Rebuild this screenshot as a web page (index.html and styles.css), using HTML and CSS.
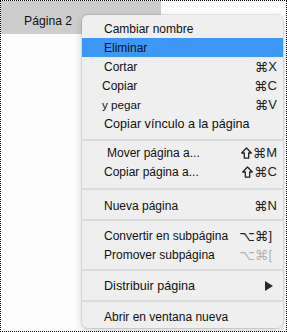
FILE: index.html
```html
<!DOCTYPE html>
<html lang="es">
<head>
  <meta charset="UTF-8" />
  <meta name="viewport" content="width=device-width, initial-scale=1.0" />
  <title>Menú de página</title>
  <link rel="stylesheet" href="styles.css">
</head>
<body>
  <div class="frame">
    <!-- Page tab -->
    <div class="page-tab">Página 2</div>

    <!-- Context menu -->
    <div class="context-menu">
      <div class="item item-first"><span class="label">Cambiar nombre</span></div>
      <div class="item active"><span class="label">Eliminar</span></div>
      <div class="item"><span class="label">Cortar</span><span class="keys"><span class="sym">⌘</span>X</span></div>
      <div class="item"><span class="label nudge-left">Copiar</span><span class="keys"><span class="sym">⌘</span>C</span></div>
      <div class="item"><span class="label nudge-left small">y pegar</span><span class="keys"><span class="sym">⌘</span>V</span></div>
      <div class="item"><span class="label big">Copiar vínculo a la página</span></div>
      <div class="sep sep-a"></div>
      <div class="item"><span class="label nudge-right">Mover página a...</span>
        <span class="keys"><svg class="shift" width="11" height="12" viewBox="0 0 11 12"><polygon points="5.5,1 10.3,6 7.7,6 7.7,11.2 3.3,11.2 3.3,6 0.7,6" fill="none" stroke="#222" stroke-width="1.3" stroke-linejoin="round"/></svg><span class="sym">⌘</span>M</span></div>
      <div class="item"><span class="label">Copiar página a...</span>
        <span class="keys"><svg class="shift" width="11" height="12" viewBox="0 0 11 12"><polygon points="5.5,1 10.3,6 7.7,6 7.7,11.2 3.3,11.2 3.3,6 0.7,6" fill="none" stroke="#222" stroke-width="1.3" stroke-linejoin="round"/></svg><span class="sym">⌘</span>C</span></div>
      <div class="sep sep-b"></div>
      <div class="item"><span class="label">Nueva página</span><span class="keys"><span class="sym">⌘</span>N</span></div>
      <div class="sep sep-c"></div>
      <div class="item"><span class="label">Convertir en subpágina</span><span class="keys bracket"><span class="sym">⌥⌘</span>]</span></div>
      <div class="item"><span class="label">Promover subpágina</span><span class="keys bracket disabled"><span class="sym">⌥⌘</span>[</span></div>
      <div class="sep sep-d"></div>
      <div class="item"><span class="label big">Distribuir página</span>
        <svg class="arrow" width="8" height="10" viewBox="0 0 8 10"><polygon points="0,0 8,5 0,10" fill="#2a2a2a"/></svg>
      </div>
      <div class="sep sep-d"></div>
      <div class="item"><span class="label">Abrir en ventana nueva</span></div>
    </div>
  </div>
</body>
</html>
```

FILE: styles.css
```css
body {
  margin: 0;
  font-family: 'Liberation Sans', Arial, sans-serif;
  color: #111;
  background: #fff;
}
.frame {
  width: 287px;
  height: 332px;
  box-sizing: border-box;
  border: 1px dotted #000;
  position: relative;
  overflow: hidden;
  background: #fdfdfd;
}
.page-tab {
  width: 160px;
  height: 33px;
  box-sizing: border-box;
  padding: 12px 0 0 23px;
  background: #cdcdcd;
  font-size: 12.2px;
  line-height: 16px;
}
/* Context menu overlay */
.context-menu {
  position: absolute;
  left: 81px;
  top: 14px;
  width: 201px;
  height: 313px;
  box-sizing: border-box;
  padding-top: 4px;
  background: #efefef;
  border-radius: 6px;
  box-shadow: 0 0 0 1px rgba(0, 0, 0, 0.08), 0 3px 8px rgba(0, 0, 0, 0.18);
}
.item {
  height: 19px;
  display: flex;
  align-items: center;
  justify-content: space-between;
  padding: 0 6px 0 22px;
  font-size: 12px;
}
.item.active {
  background: #3d97f6;
}
.label {
  white-space: nowrap;
}
.label.big {
  font-size: 12.6px;
}
.label.small {
  font-size: 11.7px;
}
.nudge-left {
  margin-left: -2px;
}
.nudge-right {
  margin-left: 3px;
}
.keys {
  display: flex;
  align-items: center;
  font-size: 13px;
  white-space: nowrap;
  color: #222;
}
.sym {
  font-family: 'DejaVu Sans', sans-serif;
  font-size: 13.5px;
}
.shift {
  margin-right: 1px;
}
.keys.bracket {
  margin-right: 5px;
}
.keys.disabled {
  color: #b3b3b3;
}
.arrow {
  margin-right: 4px;
}
.sep {
  height: 2px;
  background: #dcdcdc;
}
.sep-a { margin: 6px 0 2px; }
.sep-b { margin: 7px 0 6px; }
.sep-c { margin: 4px 0 5px; }
.sep-d { margin: 5px 0 5px; }
```
